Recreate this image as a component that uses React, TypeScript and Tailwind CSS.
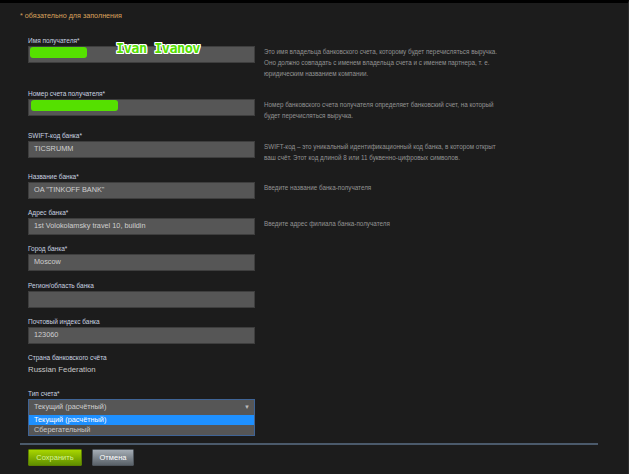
import React from "react";

const font = { fontFamily: '"Liberation Sans", Arial, sans-serif' };

function Label({ children }: { children: React.ReactNode }) {
  return <div className="h-[10px] text-[6.5px] leading-[10px] text-[#c9d2e0]">{children}</div>;
}

function Input({ value, children }: { value?: string; children?: React.ReactNode }) {
  return (
    <div className="relative flex h-[17px] w-[227px] items-center border border-[#3e3e3e] bg-[#565656] pl-[5px] text-[7.3px] text-[#cfcfcf]">
      {value}
      {children}
    </div>
  );
}

function Help({ lines }: { lines: string[] }) {
  return (
    <div className="ml-[9px] pt-[10px] text-[6.3px] leading-[11px] text-[#939393]">
      {lines.map((l, i) => (
        <div key={i} className="whitespace-nowrap">
          {l}
        </div>
      ))}
    </div>
  );
}

function Row({
  label,
  input,
  help,
  extra,
}: {
  label: string;
  input: React.ReactNode;
  help?: string[];
  extra?: boolean;
}) {
  return (
    <div className={extra ? "mb-[10px] flex items-start" : "mb-[9px] flex items-start"}>
      <div className="flex flex-col">
        <Label>{label}</Label>
        {input}
      </div>
      {help && <Help lines={help} />}
    </div>
  );
}

export default function App() {
  return (
    <div className="h-[474px] w-[629px] overflow-hidden bg-[#1c1c1c] border-t-[3px] border-black border-r border-r-[#2c2c2c]" style={font}>
      <div className="px-[20px]">
        <div className="h-[24px] pt-[8px] text-[7.2px] leading-[10px] text-[#d9a25c]">* обязательно для заполнения</div>
        <div className="pl-[8px] pt-[9px]">
          <Row
            extra
            label="Имя получателя*"
            input={
              <Input>
                <div className="absolute left-[1px] top-[0px] h-[11px] w-[57px] rounded-[3px] bg-[#55e000]" />
                <div
                  className="absolute left-[87px] top-[-7px] text-[13.5px] font-bold leading-[16px] tracking-[-0.5px] text-[#55e000]"
                  style={{
                    fontFamily: '"DejaVu Sans Mono", monospace',
                    textShadow:
                      "1px 0 0 #fff,-1px 0 0 #fff,0 1px 0 #fff,0 -1px 0 #fff,1px 1px 0 #fff,-1px -1px 0 #fff,1px -1px 0 #fff,-1px 1px 0 #fff",
                  }}
                >
                  Ivan Ivanov
                </div>
              </Input>
            }
            help={[
              "Это имя владельца банковского счета, которому будет перечисляться выручка.",
              "Оно должно совпадать с именем владельца счета и с именем партнера, т. е.",
              "юридическим названием компании.",
            ]}
          />
          <Row
            extra
            label="Номер счета получателя*"
            input={
              <Input>
                <div className="absolute left-[2px] top-[0px] h-[11px] w-[87px] rounded-[3px] bg-[#55e000]" />
              </Input>
            }
            help={[
              "Номер банковского счета получателя определяет банковский счет, на который",
              "будет перечисляться выручка.",
            ]}
          />
          <Row
            label="SWIFT-код банка*"
            input={<Input value="TICSRUMM" />}
            help={[
              "SWIFT-код – это уникальный идентификационный код банка, в котором открыт",
              "ваш счёт. Этот код длиной 8 или 11 буквенно-цифровых символов.",
            ]}
          />
          <Row label="Название банка*" input={<Input value={'OA "TINKOFF BANK"'} />} help={["Введите название банка-получателя"]} />
          <Row
            label="Адрес банка*"
            input={<Input value="1st Volokolamsky travel 10, buildin" />}
            help={["Введите адрес филиала банка-получателя"]}
          />
          <Row extra label="Город банка*" input={<Input value="Moscow" />} />
          <Row label="Регион/область банка" input={<Input />} />
          <Row label="Почтовый индекс банка" input={<Input value="123060" />} />
          <div className="mb-[10px]">
            <Label>Страна банковского счёта</Label>
            <div className="h-[16px] text-[7.8px] leading-[14px] text-[#c8c8c8]">Russian Federation</div>
          </div>
          <div>
            <Label>Тип счета*</Label>
            <div className="w-[227px] border border-[#3f6496] bg-[#565656] text-[7.3px] text-[#cfcfcf]">
              <div className="flex h-[15px] items-center justify-between pl-[5px] pr-[4px]">
                <span>Текущий (расчётный)</span>
                <span className="text-[6px] text-[#bbbbbb]">▼</span>
              </div>
              <div className="flex h-[10px] items-center bg-[#1e90ff] pl-[5px] text-white">Текущий (расчётный)</div>
              <div className="flex h-[10px] items-center pl-[5px] text-[#c8c8c8]">Сберегательный</div>
            </div>
          </div>
        </div>
        <div className="mt-[7px] h-[2px] w-[578px] bg-[#4b5a6b]" />
        <div className="flex gap-[10px] pl-[8px] pt-[4px]">
          <div className="flex h-[17px] w-[54px] items-center justify-center rounded-[1px] border border-[#5d8000] bg-gradient-to-b from-[#a9d600] to-[#5f8f00] text-[7.5px] text-[#d9f59a]">
            Сохранить
          </div>
          <div className="flex h-[17px] w-[42px] items-center justify-center rounded-[1px] border border-[#4e555c] bg-gradient-to-b from-[#a5adb5] to-[#5a6269] text-[7.5px] text-white">
            Отмена
          </div>
        </div>
      </div>
    </div>
  );
}
